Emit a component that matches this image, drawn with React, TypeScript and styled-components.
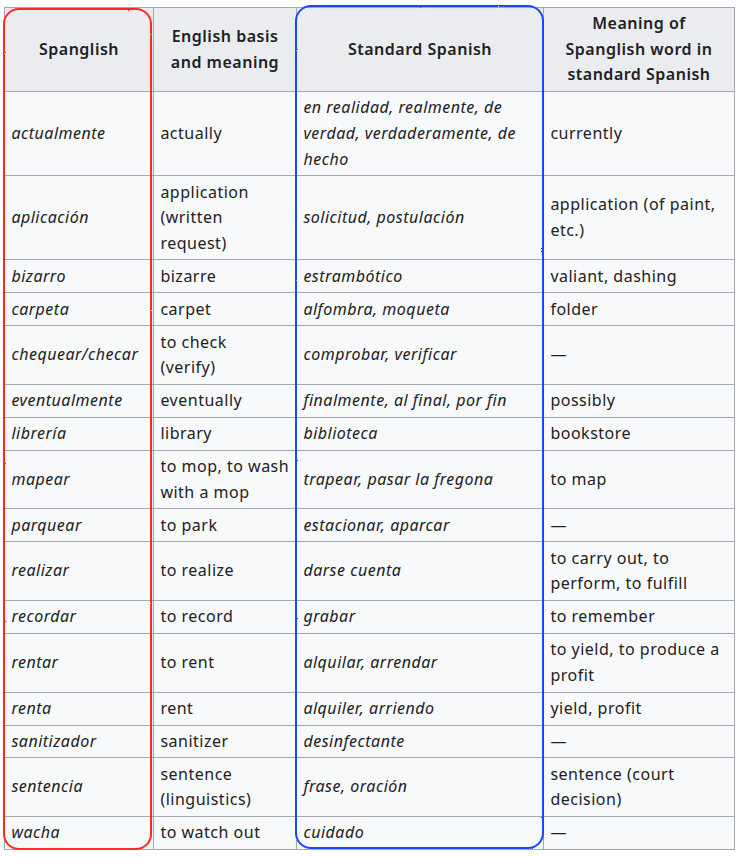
import { FunctionComponent } from "react";
import styled, { createGlobalStyle } from "styled-components";

const GlobalStyle = createGlobalStyle`
  html, body {
    margin: 0;
    padding: 0;
    background: #ffffff;
  }
  body {
    font-family: "Noto Sans", "Liberation Sans", sans-serif;
    color: #202122;
  }
`;

const Frame = styled.div`
  position: relative;
  padding: 7px 0 0 4px;
`;

const Table = styled.table`
  border-collapse: collapse;
  table-layout: fixed;
  width: 731px;
  background: #f8f9fa;
  border: 1px solid #a2a9b1;
  font-size: 16px;
  line-height: 1.6;
  letter-spacing: 0.5px;
`;

const Col = styled.col<{ $w: number }>`
  width: ${(p) => p.$w}px;
`;

const HeadCell = styled.th`
  background: #eaecf0;
  border: 1px solid #a2a9b1;
  padding: 3.2px 6.4px;
  font-weight: 600;
  text-align: center;
  vertical-align: middle;
`;

const Cell = styled.td<{ $italic?: boolean }>`
  border: 1px solid #a2a9b1;
  padding: 3.2px 6.4px;
  vertical-align: middle;
  white-space: pre-line;
  font-style: ${(p) => (p.$italic ? "italic" : "normal")};
  overflow: visible;
`;

const Highlight = styled.div`
  position: absolute;
  box-sizing: border-box;
  border-style: solid;
  border-width: 2.5px;
  border-radius: 16px;
  pointer-events: none;
  filter: url(#rough);
`;

const RedHighlight = styled(Highlight)`
  border-color: #ff2a1c;
  left: 3px;
  top: 8px;
  width: 149px;
  height: 842px;
`;

const BlueHighlight = styled(Highlight)`
  border-color: #1f45ff;
  left: 295px;
  top: 5px;
  width: 249px;
  height: 844px;
`;

const HiddenSvg = styled.svg`
  position: absolute;
  width: 0;
  height: 0;
`;

type Row = {
  spanglish: string;
  english: string;
  standard: string;
  meaning: string;
};

// "\n" marks a line break that the original table shows
const rows: Row[] = [
  {
    spanglish: "actualmente",
    english: "actually",
    standard: "en realidad, realmente, de verdad, verdaderamente, de hecho",
    meaning: "currently",
  },
  {
    spanglish: "aplicación",
    english: "application\n(written\nrequest)",
    standard: "solicitud, postulación",
    meaning: "application (of paint, etc.)",
  },
  { spanglish: "bizarro", english: "bizarre", standard: "estrambótico", meaning: "valiant, dashing" },
  { spanglish: "carpeta", english: "carpet", standard: "alfombra, moqueta", meaning: "folder" },
  {
    spanglish: "chequear/checar",
    english: "to check\n(verify)",
    standard: "comprobar, verificar",
    meaning: "—",
  },
  {
    spanglish: "eventualmente",
    english: "eventually",
    standard: "finalmente, al final, por fin",
    meaning: "possibly",
  },
  { spanglish: "librería", english: "library", standard: "biblioteca", meaning: "bookstore" },
  {
    spanglish: "mapear",
    english: "to mop, to wash\nwith a mop",
    standard: "trapear, pasar la fregona",
    meaning: "to map",
  },
  { spanglish: "parquear", english: "to park", standard: "estacionar, aparcar", meaning: "—" },
  {
    spanglish: "realizar",
    english: "to realize",
    standard: "darse cuenta",
    meaning: "to carry out, to perform, to fulfill",
  },
  { spanglish: "recordar", english: "to record", standard: "grabar", meaning: "to remember" },
  {
    spanglish: "rentar",
    english: "to rent",
    standard: "alquilar, arrendar",
    meaning: "to yield, to produce a profit",
  },
  { spanglish: "renta", english: "rent", standard: "alquiler, arriendo", meaning: "yield, profit" },
  { spanglish: "sanitizador", english: "sanitizer", standard: "desinfectante", meaning: "—" },
  {
    spanglish: "sentencia",
    english: "sentence\n(linguistics)",
    standard: "frase, oración",
    meaning: "sentence (court decision)",
  },
  { spanglish: "wacha", english: "to watch out", standard: "cuidado", meaning: "—" },
];

const RoughFilter: FunctionComponent = () => (
  <HiddenSvg aria-hidden="true">
    <filter id="rough">
      <feTurbulence type="fractalNoise" baseFrequency="0.9" numOctaves="2" seed="3" />
      <feDisplacementMap in="SourceGraphic" scale="1.6" />
    </filter>
  </HiddenSvg>
);

export default function App() {
  return (
    <>
      <GlobalStyle />
      <RoughFilter />
      <Frame>
        <Table>
          <colgroup>
            <Col $w={149} />
            <Col $w={143} />
            <Col $w={247} />
            <Col $w={191} />
          </colgroup>
          <thead>
            <tr>
              <HeadCell>Spanglish</HeadCell>
              <HeadCell>English basis and meaning</HeadCell>
              <HeadCell>Standard Spanish</HeadCell>
              <HeadCell>Meaning of Spanglish word in standard Spanish</HeadCell>
            </tr>
          </thead>
          <tbody>
            {rows.map((r) => (
              <tr key={r.spanglish}>
                <Cell $italic>{r.spanglish}</Cell>
                <Cell>{r.english}</Cell>
                <Cell $italic>{r.standard}</Cell>
                <Cell>{r.meaning}</Cell>
              </tr>
            ))}
          </tbody>
        </Table>
        <RedHighlight />
        <BlueHighlight />
      </Frame>
    </>
  );
}
